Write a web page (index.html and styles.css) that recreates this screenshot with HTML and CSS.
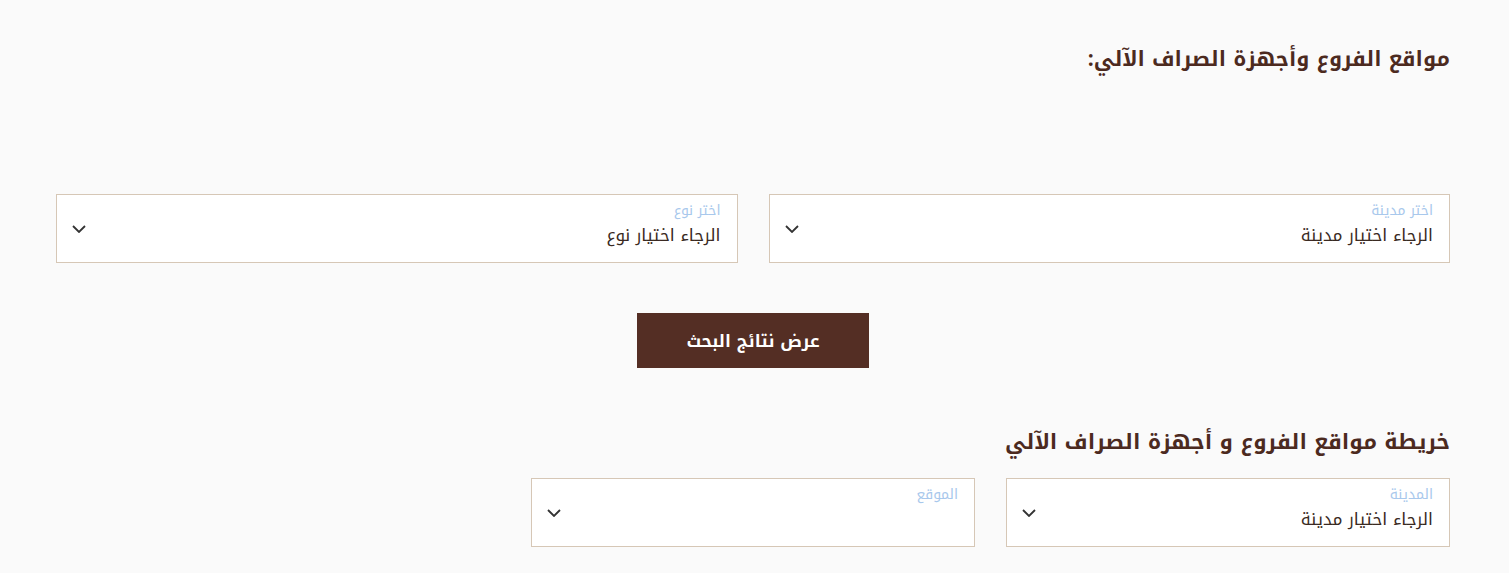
FILE: index.html
```html
<!DOCTYPE html>
<html lang="ar" dir="rtl">
<head>
  <meta charset="UTF-8">
  <meta name="viewport" content="width=device-width, initial-scale=1.0">
  <title>مواقع الفروع وأجهزة الصراف الآلي</title>
  <link rel="stylesheet" href="styles.css">
</head>
<body>
  <div class="page">
    <h2 class="section-title">مواقع الفروع وأجهزة الصراف الآلي:</h2>

    <div class="search-row">
      <div class="select-box">
        <span class="select-label">اختر مدينة</span>
        <span class="select-value">الرجاء اختيار مدينة</span>
        <svg class="chevron" width="14" height="8" viewBox="0 0 14 8"><path d="M1 1l6 6 6-6" fill="none" stroke="#333" stroke-width="1.8"/></svg>
      </div>
      <div class="select-box">
        <span class="select-label">اختر نوع</span>
        <span class="select-value">الرجاء اختيار نوع</span>
        <svg class="chevron" width="14" height="8" viewBox="0 0 14 8"><path d="M1 1l6 6 6-6" fill="none" stroke="#333" stroke-width="1.8"/></svg>
      </div>
    </div>

    <div class="actions">
      <button class="search-btn">عرض نتائج البحث</button>
    </div>

    <h2 class="map-title">خريطة مواقع الفروع و أجهزة الصراف الآلي</h2>

    <div class="map-row">
      <div class="select-box">
        <span class="select-label">المدينة</span>
        <span class="select-value">الرجاء اختيار مدينة</span>
        <svg class="chevron" width="14" height="8" viewBox="0 0 14 8"><path d="M1 1l6 6 6-6" fill="none" stroke="#333" stroke-width="1.8"/></svg>
      </div>
      <div class="select-box">
        <span class="select-label">الموقع</span>
        <span class="select-value"></span>
        <svg class="chevron" width="14" height="8" viewBox="0 0 14 8"><path d="M1 1l6 6 6-6" fill="none" stroke="#333" stroke-width="1.8"/></svg>
      </div>
    </div>
  </div>
</body>
</html>
```

FILE: styles.css
```css
body {
  font-family: "Noto Kufi Arabic", "Noto Sans Arabic", "DejaVu Sans", sans-serif;
  background-color: #fafafa;
  margin: 0;
  color: #333;
}
.page {
  margin: 0 59px 0 56px;
  padding-top: 40px;
}
.section-title {
  margin: 0;
  font-size: 21px;
  font-weight: bold;
  color: #4c2a1f;
  line-height: 38px;
}
.search-row {
  display: grid;
  grid-template-columns: 1fr 1fr;
  gap: 31px;
  margin-top: 116px;
}
.map-row {
  display: grid;
  grid-template-columns: repeat(3, 1fr);
  gap: 31px;
  margin-top: 16px;
}
.select-box {
  position: relative;
  height: 61px;
  background: #fff;
  border: 1px solid #d6c7b6;
  padding: 6px 16px 0 16px;
  display: flex;
  flex-direction: column;
}
.select-label {
  font-size: 14px;
  color: #a8c8ec;
  line-height: 19px;
}
.select-value {
  font-size: 17px;
  color: #3a2a22;
  line-height: 30px;
}
.chevron {
  position: absolute;
  left: 15px;
  top: 30px;
}
.actions {
  display: flex;
  justify-content: center;
  margin-top: 50px;
}
.search-btn {
  width: 232px;
  height: 55px;
  border: none;
  background-color: #542e24;
  color: #fff;
  font-family: inherit;
  font-size: 17px;
  font-weight: bold;
  cursor: pointer;
}
.map-title {
  margin: 54px 0 0 0;
  font-size: 21.5px;
  font-weight: bold;
  color: #4c2a1f;
  line-height: 40px;
}
```
